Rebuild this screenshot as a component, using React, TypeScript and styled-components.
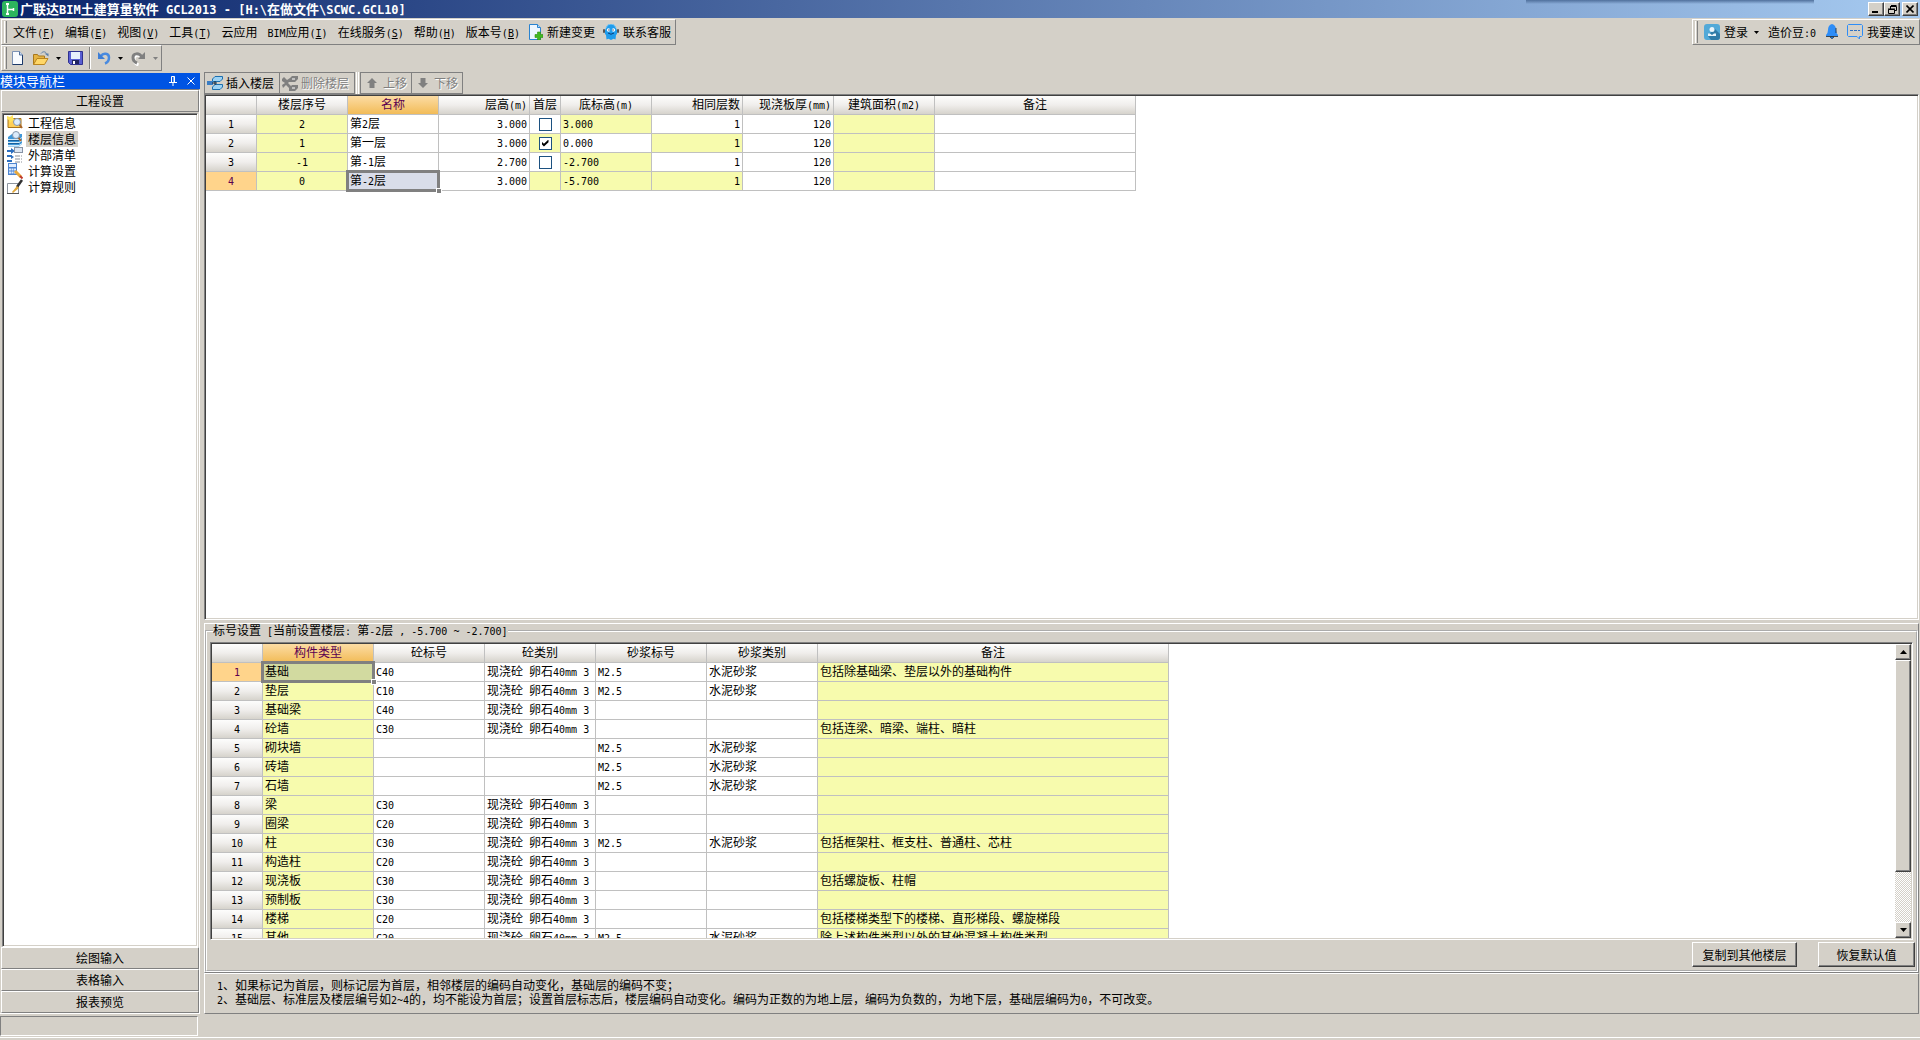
import React from "react";
import styled, { createGlobalStyle, css } from "styled-components";

const C = {
  face: "#d4d0c8",
  shadow: "#808080",
  dark: "#404040",
  light: "#ffffff",
  grid: "#c0c0c0",
  locked: "#f7fbad",
  picked: "#ffd48b",
  wine: "#5a0050",
};

const Global = createGlobalStyle`
  *, *::before, *::after { box-sizing: border-box; }
  body { margin: 0; background: ${C.face}; }
  body, button, input, legend, table {
    font-family: "Noto Sans CJK SC", sans-serif;
    font-size: 12px;
    line-height: 14px;
    color: #000;
  }
  button { padding: 0; border: 0; background: none; cursor: default; white-space: nowrap; }
`;

/* ---------- text: CJK at 12px, Latin set in a half-width mono face ---------- */

const Half = styled.span`
  font-family: "DejaVu Sans Mono", monospace;
  font-size: ${(p: { $size?: number }) => p.$size ?? 10}px;
  line-height: 1;
`;
const Wide = styled.span`
  white-space: pre;
`;

function Text({ children, half }: { children: string; half?: number }) {
  const runs = children.match(/[\x20-\x7e]+|[^\x20-\x7e]+/g) ?? [];
  return (
    <Wide>
      {runs.map((run, i) => {
        if (!/^[\x20-\x7e]/.test(run)) return <React.Fragment key={i}>{run}</React.Fragment>;
        const at = run.indexOf("&");
        return (
          <Half key={i} $size={half}>
            {at < 0 ? run : (
              <>
                {run.slice(0, at)}
                <u>{run[at + 1]}</u>
                {run.slice(at + 2)}
              </>
            )}
          </Half>
        );
      })}
    </Wide>
  );
}

/* ---------- shared bevels ---------- */

const sunken = css`
  border: 1px solid;
  border-color: ${C.shadow} ${C.light} ${C.light} ${C.shadow};
  box-shadow: inset 1px 1px ${C.dark}, inset -1px -1px ${C.face};
  padding: 1px;
`;
const raised = css`
  background: ${C.face};
  border: 1px solid;
  border-color: ${C.light} ${C.dark} ${C.dark} ${C.light};
  box-shadow: inset -1px -1px ${C.shadow};
`;
const soft = css`
  border: 1px solid;
  border-color: ${C.light} ${C.shadow} ${C.shadow} ${C.light};
`;

/* ---------- frame ---------- */

const Window = styled.div`
  display: flex;
  flex-direction: column;
  height: 100vh;
  overflow: hidden;
  background: ${C.face};
`;
const TitleBar = styled.header`
  position: relative;
  display: flex;
  align-items: center;
  flex: none;
  height: 18px;
  padding: 0 2px;
  gap: 2px;
  background: linear-gradient(90deg, #0a246a, #a6caf0);
`;
const TitleText = styled.h1`
  flex: 1;
  margin: 0;
  font-size: 13px;
  line-height: 18px;
  font-weight: 700;
  color: #fff;
`;
const DockShade = styled.div`
  position: absolute;
  top: 0;
  right: 106px;
  width: 288px;
  height: 4px;
  background: linear-gradient(#50709c, rgba(100, 140, 190, 0));
`;
const CaptionButtons = styled.div`
  display: flex;
`;
const CaptionButton = styled.button<{ $apart?: boolean }>`
  ${raised}
  display: grid;
  place-items: center;
  width: 16px;
  height: 14px;
  margin-left: ${(p) => (p.$apart ? 2 : 0)}px;
`;
const BarRow = styled.div`
  display: flex;
  justify-content: space-between;
  flex: none;
  padding: 1px 0 0 1px;
`;
const ToolRow = styled(BarRow)`
  padding: 0 0 1px 1px;
`;
const Bar = styled.div`
  ${soft}
  display: flex;
  align-items: center;
  height: 26px;
  padding: 0 0 0 2px;
`;
const Grip = styled.i`
  align-self: stretch;
  width: 3px;
  margin: 1px 0;
  border-left: 1px solid ${C.light};
  border-right: 1px solid ${C.shadow};
`;
const MenuItems = styled.nav`
  display: flex;
  align-items: center;
  padding-left: 1px;
`;
const MenuButton = styled.button`
  display: flex;
  align-items: center;
  gap: 4px;
  height: 22px;
  padding: 0 5px;
`;
const MenuIconButton = styled(MenuButton)`
  padding: 0 4px;
`;
const IconTools = styled.div`
  display: flex;
  align-items: center;
  padding: 0 3px 0 4px;
  gap: 7px;
`;
const IconButton = styled.button`
  display: grid;
  place-items: center;
  height: 20px;
`;
const DropButton = styled(IconButton)`
  padding: 0 4px 0 1px;
`;
const Rule = styled.i`
  width: 2px;
  height: 22px;
  margin: 0 -1px;
  border-left: 1px solid ${C.shadow};
  border-right: 1px solid ${C.light};
`;

/* ---------- body ---------- */

const Body = styled.div`
  display: flex;
  flex: 1;
  min-height: 0;
  gap: 4px;
  padding-right: 1px;
`;
const Sidebar = styled.aside`
  display: flex;
  flex-direction: column;
  width: 200px;
  padding-top: 1px;
`;
const SideCaption = styled.div`
  display: flex;
  align-items: center;
  flex: none;
  height: 16px;
  padding-right: 5px;
  gap: 10px;
  color: #fff;
  background: #0054e3;
`;
const SideTitle = styled.h2`
  flex: 1;
  margin: 0;
  font-size: 13px;
  line-height: 14px;
  font-weight: 400;
`;
const SideFrame = styled.div`
  display: flex;
  flex-direction: column;
  flex: 1;
  min-height: 0;
  border: 1px solid;
  border-color: ${C.shadow} ${C.light} ${C.light} ${C.face};
  border-left-width: 0;
  padding-left: 1px;
`;
const SideTab = styled.button`
  ${soft}
  flex: none;
  height: 22px;
`;
const NavList = styled.ul`
  ${sunken}
  flex: 1;
  margin: 1px 1px 0 1px;
  list-style: none;
  background: #fff;
`;
const NavItem = styled.li`
  display: flex;
  height: 16px;
  padding-left: 3px;
  gap: 3px;
`;
const NavLink = styled.a<{ $on?: boolean }>`
  padding: 0 2px;
  line-height: 16px;
  color: #000;
  text-decoration: none;
  background: ${(p) => (p.$on ? C.face : "transparent")};
`;

const Main = styled.main`
  display: flex;
  flex-direction: column;
  flex: 1;
  min-width: 0;
`;
const FloorTools = styled.div`
  display: flex;
  flex: none;
  height: 22px;
`;
const FloorTool = styled.button<{ $narrow?: boolean }>`
  display: flex;
  align-items: center;
  width: ${(p) => (p.$narrow ? 52 : 76)}px;
  padding-left: ${(p) => (p.$narrow ? 5 : 2)}px;
  gap: ${(p) => (p.$narrow ? 5 : 3)}px;
  border: 1px solid ${C.shadow};
  & + & { margin-left: -1px; }
  &:disabled { color: ${C.shadow}; text-shadow: 1px 1px #fff; }
`;
const ToolSplit = styled.i`
  width: 3px;
  margin: 0 1px;
  border-left: 1px solid ${C.light};
  border-right: 1px solid ${C.light};
`;
const GridBox = styled.div`
  ${sunken}
  display: flex;
  flex: 1;
  min-height: 0;
  background: #fff;
`;
const GridView = styled.div`
  flex: 1;
  overflow: hidden;
`;

/* ---------- tables ---------- */

const Table = styled.table<{ $width: number }>`
  width: ${(p) => p.$width}px;
  table-layout: fixed;
  border-collapse: separate;
  border-spacing: 0;
`;
type CellProps = { $align?: string; $locked?: boolean; $active?: boolean };
const cell = css`
  height: 19px;
  padding: 0 2px 2px;
  border-right: 1px solid ${C.grid};
  border-bottom: 1px solid ${C.grid};
  line-height: 16px;
  font-weight: 400;
  white-space: nowrap;
`;
const HeadCell = styled.th<CellProps>`
  ${cell}
  text-align: ${(p) => p.$align ?? "center"};
  color: ${(p) => (p.$active ? C.wine : "#000")};
  background: ${(p) =>
    p.$active ? "linear-gradient(#fcdca4, #f2bc58)" : "linear-gradient(#fdfdfc, #f0eeec 50%, #d6d3cc)"};
`;
const RowHead = styled.th<CellProps>`
  ${cell}
  text-align: center;
  color: ${(p) => (p.$active ? C.wine : "#000")};
  background: ${(p) => (p.$active ? C.picked : "linear-gradient(#fdfdfc, #f0eeec 50%, #d6d3cc)")};
`;
const Cell = styled.td<CellProps>`
  ${cell}
  position: relative;
  text-align: ${(p) => p.$align ?? "left"};
  background: ${(p) => (p.$locked ? C.locked : "#fff")};
`;
const TickCell = styled(Cell)`
  padding: 0;
`;
const Cursor = styled.span`
  position: absolute;
  inset: -2px;
  border: 3px solid ${C.shadow};
  pointer-events: none;
  &::after {
    content: "";
    position: absolute;
    right: -5px;
    bottom: -5px;
    width: 6px;
    height: 6px;
    border: 1px solid #fff;
    background: ${C.shadow};
  }
`;
const CursorCell = styled(Cell)<{ $fill: string }>`
  z-index: 1;
  background: ${(p) => p.$fill};
`;
const Tick = styled.input`
  appearance: none;
  display: block;
  width: 13px;
  height: 13px;
  margin: 0 auto;
  border: 1px solid #1c5180;
  background: #fff;
  &:checked::after {
    content: "";
    display: block;
    width: 7px;
    height: 7px;
    margin: 2px;
    background: #000;
    clip-path: polygon(0 29%, 35% 62%, 100% 0, 100% 38%, 35% 100%, 0 66%);
  }
`;

type Col = { title: string; width: number; align?: string; active?: boolean };

function Head({ cols }: { cols: Col[] }) {
  return (
    <>
      <colgroup>
        {cols.map((c, i) => <col key={i} style={{ width: c.width }} />)}
      </colgroup>
      <thead>
        <tr>
          {cols.map((c, i) => (
            <HeadCell key={i} scope="col" $align={c.align} $active={c.active}>
              <Text>{c.title}</Text>
            </HeadCell>
          ))}
        </tr>
      </thead>
    </>
  );
}
const total = (cols: Col[]) => cols.reduce((n, c) => n + c.width, 0);

const floorCols: Col[] = [
  { title: "", width: 51 },
  { title: "楼层序号", width: 91 },
  { title: "名称", width: 91, active: true },
  { title: "层高(m)", width: 91, align: "right" },
  { title: "首层", width: 31 },
  { title: "底标高(m)", width: 91 },
  { title: "相同层数", width: 91, align: "right" },
  { title: "现浇板厚(mm)", width: 91, align: "right" },
  { title: "建筑面积(m2)", width: 101 },
  { title: "备注", width: 201 },
];
const floors = [
  { code: "2", name: "第2层", height: "3.000", first: false, base: "3.000", baseLocked: true, sameLocked: false },
  { code: "1", name: "第一层", height: "3.000", first: true, base: "0.000", baseLocked: false, sameLocked: true },
  { code: "-1", name: "第-1层", height: "2.700", first: false, base: "-2.700", baseLocked: true, sameLocked: false },
  { code: "0", name: "第-2层", height: "3.000", first: null, base: "-5.700", baseLocked: true, sameLocked: true },
];

function FloorTable() {
  return (
    <Table $width={total(floorCols)}>
      <Head cols={floorCols} />
      <tbody>
        {floors.map((f, i) => {
          const current = i === 3;
          return (
            <tr key={f.code}>
              <RowHead scope="row" $active={current}><Text>{String(i + 1)}</Text></RowHead>
              <Cell $locked $align="center"><Text>{f.code}</Text></Cell>
              {current ? (
                <CursorCell $fill="#d9dde9"><Text>{f.name}</Text><Cursor /></CursorCell>
              ) : (
                <Cell><Text>{f.name}</Text></Cell>
              )}
              <Cell $align="right"><Text>{f.height}</Text></Cell>
              <TickCell $locked={f.first !== false}>
                {f.first !== null && <Tick type="checkbox" aria-label={`首层 ${f.name}`} defaultChecked={f.first} />}
              </TickCell>
              <Cell $locked={f.baseLocked}><Text>{f.base}</Text></Cell>
              <Cell $locked={f.sameLocked} $align="right"><Text>1</Text></Cell>
              <Cell $align="right"><Text>120</Text></Cell>
              <Cell $locked />
              <Cell />
            </tr>
          );
        })}
      </tbody>
    </Table>
  );
}

const gradeCols: Col[] = [
  { title: "", width: 51 },
  { title: "构件类型", width: 111, active: true },
  { title: "砼标号", width: 111 },
  { title: "砼类别", width: 111 },
  { title: "砂浆标号", width: 111 },
  { title: "砂浆类别", width: 111 },
  { title: "备注", width: 351 },
];
const MIX = "现浇砼 卵石40mm 3";
const MORTAR = "水泥砂浆";
const grades: [string, string, string, string][] = [
  ["基础", "C40", "M2.5", "包括除基础梁、垫层以外的基础构件"],
  ["垫层", "C10", "M2.5", ""],
  ["基础梁", "C40", "", ""],
  ["砼墙", "C30", "", "包括连梁、暗梁、端柱、暗柱"],
  ["砌块墙", "", "M2.5", ""],
  ["砖墙", "", "M2.5", ""],
  ["石墙", "", "M2.5", ""],
  ["梁", "C30", "", ""],
  ["圈梁", "C20", "", ""],
  ["柱", "C30", "M2.5", "包括框架柱、框支柱、普通柱、芯柱"],
  ["构造柱", "C20", "", ""],
  ["现浇板", "C30", "", "包括螺旋板、柱帽"],
  ["预制板", "C30", "", ""],
  ["楼梯", "C20", "", "包括楼梯类型下的楼梯、直形梯段、螺旋梯段"],
  ["其他", "C20", "M2.5", "除上述构件类型以外的其他混凝土构件类型"],
];

function GradeTable() {
  return (
    <Table $width={total(gradeCols)}>
      <Head cols={gradeCols} />
      <tbody>
        {grades.map(([kind, grade, mortar, note], i) => (
          <tr key={kind}>
            <RowHead scope="row" $active={i === 0}><Text>{String(i + 1)}</Text></RowHead>
            {i === 0 ? (
              <CursorCell $fill="#d2daa0"><Text>{kind}</Text><Cursor /></CursorCell>
            ) : (
              <Cell $locked><Text>{kind}</Text></Cell>
            )}
            <Cell><Text>{grade}</Text></Cell>
            <Cell><Text>{grade && MIX}</Text></Cell>
            <Cell><Text>{mortar}</Text></Cell>
            <Cell><Text>{mortar && MORTAR}</Text></Cell>
            <Cell $locked><Text>{note}</Text></Cell>
          </tr>
        ))}
      </tbody>
    </Table>
  );
}

/* ---------- lower panel ---------- */

const GradePanel = styled.section`
  ${soft}
  display: flex;
  flex: none;
  height: 350px;
  margin-top: 3px;
`;
const Group = styled.fieldset`
  display: flex;
  flex-direction: column;
  flex: 1;
  min-width: 0;
  margin: 0;
  padding: 5px 1px 0 3px;
  border: 2px groove #fff;
`;
const Legend = styled.legend`
  margin-left: 3px;
  padding: 0;
  line-height: 12px;
`;
const GroupGrid = styled(GridBox)`
  margin-right: 2px;
`;
const Scroll = styled.div`
  display: flex;
  flex-direction: column;
  width: 16px;
  background: repeating-conic-gradient(#fff 0 25%, ${C.face} 0 50%) 0 0 / 2px 2px;
`;
const ScrollPart = styled.button`
  ${raised}
  display: grid;
  place-items: center;
  flex: none;
  height: 16px;
`;
const Thumb = styled.div`
  ${raised}
  flex: 0 0 72%;
`;
const Filler = styled.div`
  flex: 1;
`;
const Actions = styled.div`
  display: flex;
  justify-content: flex-end;
  flex: none;
  gap: 21px;
  padding: 2px 0 3px;
`;
const Action = styled.button<{ $wide?: boolean }>`
  ${raised}
  width: ${(p) => (p.$wide ? 105 : 97)}px;
  height: 25px;
`;
const Notes = styled.section`
  ${soft}
  flex: none;
  height: 41px;
  padding: 4px 12px;
`;
const Note = styled.p`
  margin: 0;
  line-height: 13px;
`;
const Status = styled.footer`
  flex: none;
  height: 26px;
  padding-top: 2px;
`;
const StatusLine = styled.div`
  padding-bottom: 1px;
  border-bottom: 1px solid ${C.light};
`;
const StatusBox = styled.div`
  width: 198px;
  height: 20px;
  border: 1px solid;
  border-color: ${C.shadow} ${C.light} ${C.light} ${C.shadow};
`;

/* ---------- drawings ---------- */

const Svg = styled.svg`
  display: block;
  flex: none;
`;
const Ico = ({ w = 16, h = 16, children }: { w?: number; h?: number; children: React.ReactNode }) => (
  <Svg width={w} height={h} viewBox={`0 0 ${w} ${h}`} aria-hidden="true">{children}</Svg>
);
const AppLogo = () => (
  <Ico>
    <rect width="16" height="16" rx="3" fill="#2db55d" />
    <path d="M5.500 3v10M5.500 8.500h6M11.500 7v3" stroke="#fff" strokeWidth="1.500" fill="none" />
    <rect x="4" y="2" width="3" height="2" fill="#fff" /><rect x="4" y="12" width="3" height="2" fill="#fff" />
  </Ico>
);
const Caret = ({ off }: { off?: boolean }) => (
  <Ico w={5} h={3}><path d="M0 0h5L2.500 3z" fill={off ? "#808080" : "#000"} /></Ico>
);
const PageIcon = () => (
  <Ico w={14}>
    <path d="M1.500 1.500h7l3 3.500v9.500h-10z" fill="#f8fbff" stroke="#7d93b5" />
    <path d="M11.500 5v9.500h-10" stroke="#1d3968" fill="none" />
    <path d="M8.500 1.500V5h3" fill="#c7daf2" stroke="#52709c" />
  </Ico>
);
const FolderIcon = () => (
  <Ico w={17}>
    <path d="M1.500 14.500V4.500h4l1 1.500h6v3" fill="#e6b442" stroke="#a9781c" />
    <path d="M1.500 14.500L5 8.500h11l-3.500 6z" fill="#ffd768" stroke="#b98520" />
    <path d="M9 3.500c2-2.500 4.500-2 5.500 0" stroke="#5b7fa8" fill="none" /><path d="M12.500 3.500h4v3z" fill="#5b7fa8" />
  </Ico>
);
const DiskIcon = () => (
  <Ico w={15}>
    <path d="M.5 1.500h14v13h-12l-2-2z" fill="#5a5fd2" stroke="#2f3190" />
    <rect x="3" y="2" width="9" height="7" fill="#e8effc" /><rect x="4" y="10" width="7" height="4" fill="#202460" />
    <rect x="5" y="11" width="2" height="3" fill="#fff" />
  </Ico>
);
const UndoIcon = () => (
  <Ico w={14}>
    <path d="M4 6C6 2.500 12 3 12 7.500c0 3-1.500 5-4 6" stroke="#4a8be0" strokeWidth="2.500" fill="none" />
    <path d="M1 2v7h7z" fill="#3f7fd6" />
  </Ico>
);
const RedoIcon = () => (
  <Ico>
    <path d="M12 7C9 3 3 3.500 3 8c0 3 1.500 5 4.500 6" stroke="#fff" strokeWidth="3" fill="none" transform="translate(1 1)" />
    <path d="M12 7C9 2.500 3 3 3 7.500c0 3 1.500 4.500 4 5.500" stroke="#808080" strokeWidth="3" fill="none" />
    <path d="M15 2v7H8z" fill="#808080" />
  </Ico>
);
const ChangeIcon = () => (
  <Ico w={14}>
    <path d="M.5.5h8l3 3v12H.5z" fill="#eef6fe" stroke="#2a83d0" /><path d="M8.500.5v3h3" fill="#b9dcf8" stroke="#2a83d0" />
    <path d="M8.500 8h3v2.500H14v3h-2.500V16h-3v-2.500H6v-3h2.500z" fill="#43b81f" stroke="#2f8d12" strokeWidth=".6" />
  </Ico>
);
const ServiceIcon = () => (
  <Ico>
    <path d="M3 4Q4 0 8 0t5 4q2 3 1 6l-1 1-.5 4.500-2-.8L8 16l-2.500-1.300-2 .8L3 11l-1-1Q1 7 3 4z" fill="#1f9cec" />
    <path d="M3 4Q4 0 8 0t5 4" stroke="#7cc4f0" fill="none" />
    <rect x="0" y="5" width="2" height="4" rx="1" fill="#555" /><rect x="14" y="5" width="2" height="4" rx="1" fill="#555" />
    <circle cx="5.500" cy="6" r="1.700" fill="#fff" /><circle cx="10.500" cy="6" r="1.700" fill="#fff" />
    <circle cx="6" cy="6" r=".7" fill="#083c78" /><circle cx="10" cy="6" r=".7" fill="#083c78" />
    <path d="M5 9q3 2.500 6 0" stroke="#083c78" fill="none" />
  </Ico>
);
const UserIcon = () => (
  <Ico>
    <rect width="16" height="16" rx="3" fill="#52a9d8" /><path d="M10 4l6 6v3q0 3-3 3H7l-3-4z" fill="#2f7ba8" />
    <circle cx="8" cy="5.500" r="2.500" fill="#e8f3fa" /><path d="M4 12V9.500h2L8 11l2-1.500h2V12z" fill="#e8f3fa" />
  </Ico>
);
const BellIcon = () => (
  <Ico w={12}>
    <path d="M6 0q4 1 4 6 0 3 2 5v1H0v-1q2-2 2-5 0-5 4-6z" fill="#2e8df7" />
    <path d="M0 12.500h12M10 4v5" stroke="#123" strokeWidth=".8" /><path d="M4 13h4l-2 2z" fill="#2e8df7" stroke="#123" strokeWidth=".5" />
  </Ico>
);
const ChatIcon = () => (
  <Ico>
    <path d="M1.500.5h13l1 1v10l-1 1h-2V15l-2.500-2.500h-8.500l-1-1v-10z" fill="none" stroke="#2e8df7" />
    <path d="M3 6.500h10" stroke="#2e6fc0" strokeDasharray="3 1" />
  </Ico>
);
const InsertIcon = () => (
  <Ico>
    <path d="M5.500 4L8 1.500h7.500V4L13 6.500H5.500zM5.500 12L8 9.500h7.500V12l-2.500 2.500H5.500z" fill="#9cd2f4" stroke="#1c6fae" />
    <rect x="0" y="6" width="6" height="4" fill="#3a7dc4" /><path d="M5 8h5M8 6v4" stroke="#102840" />
  </Ico>
);
const DeleteIcon = () => (
  <Ico>
    <path d="M7 4l3-3h6v3l-3 3H7zM7 13l3-3h6v3l-3 3H7zM0 4l2-2 3 3 3-2v3L6 8l3 3-2 2-3-3-3 3-1-3 3-2-3-2z" fill="#808080" />
    <path d="M10 4h3M10 13h3" stroke="#fff" />
  </Ico>
);
const ArrowIcon = ({ down }: { down?: boolean }) => (
  <Ico w={12} h={12}>
    <g transform={down ? "rotate(180 6 6)" : undefined}>
      <path d="M6 1l5 5H8.500v5h-5V6H1z" fill="#808080" />
    </g>
  </Ico>
);
const PinIcon = () => (
  <Ico w={8} h={10}><path d="M2.500 6V.5h3V6M5 .5V6M0 6.500h8M4 6.500V10" stroke="#fff" fill="none" /></Ico>
);
const CrossIcon = ({ ink, w = 8 }: { ink: string; w?: number }) => (
  <Ico w={w} h={w}><path d={`M.5.5l${w - 1} ${w - 1}M${w - 0.5}.5L.5 ${w - 0.5}`} stroke={ink} strokeWidth={ink === "#000" ? 1.6 : 1} /></Ico>
);
const Lens = ({ x, y }: { x: number; y: number }) => (
  <g>
    <path d={`M${x + 2} ${y + 2}l3 4`} stroke="#a8662a" strokeWidth="2" />
    <circle cx={x} cy={y} r="3.500" fill="#dcecfb" stroke="#8494a8" />
  </g>
);
const navIcons = [
  <Ico key="info">
    <path d="M1 3.500h13v9H1z" fill="#ffcf57" stroke="#a7741a" /><path d="M0 1l3 1 3-2v3l2 2-3 1-2 2-1-3-2-1z" fill="#ffe35c" /><Lens x={10} y={7} />
  </Ico>,
  <Ico key="floor">
    <path d="M1 6l4-3h10v10l-3 2.500H1z" fill="#3f97d8" /><path d="M1 8.500h11l3-2M1 11.500h11l3-2M1 14.500h11l3-2" stroke="#d5ecfb" fill="none" />
    <path d="M1 9.500h11M1 12.500h11" stroke="#18619e" /><Lens x={9} y={4} />
  </Ico>,
  <Ico key="list">
    <path d="M0 4h5M0 9h5M0 14h5" stroke="#2c6fc0" strokeWidth="2" /><path d="M4 1l4 3-4 3zM4 8l3 2-3 2z" fill="#2c6fc0" />
    <rect x="7.500" y=".5" width="8" height="5" fill="#dde6f2" stroke="#8793a5" /><path d="M8 9h7M8 12h7M8 15h7" stroke="#8a8f98" strokeDasharray="5 1" />
  </Ico>,
  <Ico key="calc">
    <rect x="1" y="0" width="9" height="12" fill="#4d84d0" /><rect x="2" y="1" width="7" height="3" fill="#dcebff" />
    <path d="M2 6.500h7M2 9.500h7" stroke="#dcebff" strokeWidth="2" strokeDasharray="2 .5" />
    <path d="M8 8l6 6" stroke="#e8a93c" strokeWidth="3" /><path d="M13 13l2.500 2.500" stroke="#c0392b" strokeWidth="2" />
  </Ico>,
  <Ico key="rule">
    <path d="M.5 4.500h11v10H.5z" fill="#fff" stroke="#8d949e" /><path d="M0 14.500h12" stroke="#555" />
    <path d="M15 1l-5 7" stroke="#333" strokeWidth="2.500" /><path d="M10 7l2 2-6 5-1-1z" fill="#e0a73a" />
  </Ico>,
];

const menus = ["文件(&F)", "编辑(&E)", "视图(&V)", "工具(&T)", "云应用", "BIM应用(&I)", "在线服务(&S)", "帮助(&H)", "版本号(&B)"];
const navs = ["工程信息", "楼层信息", "外部清单", "计算设置", "计算规则"];

export default function App() {
  return (
    <Window>
      <Global />
      <TitleBar>
        <AppLogo />
        <TitleText><Text half={12}>广联达BIM土建算量软件 GCL2013 - [H:\在做文件\SCWC.GCL10]</Text></TitleText>
        <DockShade />
        <CaptionButtons>
          <CaptionButton aria-label="最小化"><Ico w={8} h={8}><path d="M0 7h6" stroke="#000" strokeWidth="2" /></Ico></CaptionButton>
          <CaptionButton aria-label="还原">
            <Ico w={9} h={9}><path d="M3 .5h5.500M2.500 1.500h6v4h-2M2.500 1v3M.5 4.500h6v4h-6zM0 4h7" stroke="#000" fill="none" /></Ico>
          </CaptionButton>
          <CaptionButton $apart aria-label="关闭"><CrossIcon ink="#000" /></CaptionButton>
        </CaptionButtons>
      </TitleBar>

      <BarRow>
        <Bar>
          <Grip />
          <MenuItems>
            {menus.map((m) => <MenuButton key={m}><Text>{m}</Text></MenuButton>)}
            <MenuIconButton><ChangeIcon />新建变更</MenuIconButton>
            <MenuIconButton><ServiceIcon />联系客服</MenuIconButton>
          </MenuItems>
        </Bar>
        <Bar>
          <Grip />
          <MenuItems>
            <MenuButton><UserIcon />登录</MenuButton>
            <DropButton aria-label="登录选项"><Caret /></DropButton>
            <MenuButton><Text>造价豆:0</Text></MenuButton>
            <MenuButton aria-label="消息"><BellIcon /></MenuButton>
            <MenuIconButton><ChatIcon />我要建议</MenuIconButton>
          </MenuItems>
        </Bar>
      </BarRow>

      <ToolRow>
        <Bar>
          <Grip />
          <IconTools>
            <IconButton aria-label="新建"><PageIcon /></IconButton>
            <IconButton aria-label="打开"><FolderIcon /></IconButton>
            <IconButton aria-label="打开选项"><Caret /></IconButton>
            <IconButton aria-label="保存"><DiskIcon /></IconButton>
            <Rule />
            <IconButton aria-label="撤销"><UndoIcon /></IconButton>
            <IconButton aria-label="撤销选项"><Caret /></IconButton>
            <IconButton aria-label="恢复" disabled><RedoIcon /></IconButton>
            <IconButton aria-label="恢复选项" disabled><Caret off /></IconButton>
          </IconTools>
        </Bar>
      </ToolRow>

      <Body>
        <Sidebar>
          <SideCaption>
            <SideTitle>模块导航栏</SideTitle>
            <IconButton aria-label="固定"><PinIcon /></IconButton>
            <IconButton aria-label="关闭导航栏"><CrossIcon ink="#fff" /></IconButton>
          </SideCaption>
          <SideFrame>
            <SideTab>工程设置</SideTab>
            <NavList>
              {navs.map((n, i) => (
                <NavItem key={n}>{navIcons[i]}<NavLink href="#" $on={i === 1}>{n}</NavLink></NavItem>
              ))}
            </NavList>
            <SideTab>绘图输入</SideTab>
            <SideTab>表格输入</SideTab>
            <SideTab>报表预览</SideTab>
          </SideFrame>
        </Sidebar>

        <Main>
          <FloorTools>
            <FloorTool><InsertIcon />插入楼层</FloorTool>
            <FloorTool disabled><DeleteIcon />删除楼层</FloorTool>
            <ToolSplit />
            <FloorTool $narrow disabled><ArrowIcon />上移</FloorTool>
            <FloorTool $narrow disabled><ArrowIcon down />下移</FloorTool>
          </FloorTools>
          <GridBox>
            <GridView><FloorTable /></GridView>
          </GridBox>

          <GradePanel>
            <Group>
              <Legend><Text>标号设置 [当前设置楼层: 第-2层 , -5.700 ~ -2.700]</Text></Legend>
              <GroupGrid>
                <GridView><GradeTable /></GridView>
                <Scroll>
                  <ScrollPart aria-label="向上滚动"><Ico w={7} h={4}><path d="M0 4h7L3.500 0z" /></Ico></ScrollPart>
                  <Thumb />
                  <Filler />
                  <ScrollPart aria-label="向下滚动"><Ico w={7} h={4}><path d="M0 0h7L3.500 4z" /></Ico></ScrollPart>
                </Scroll>
              </GroupGrid>
              <Actions>
                <Action $wide>复制到其他楼层</Action>
                <Action>恢复默认值</Action>
              </Actions>
            </Group>
          </GradePanel>

          <Notes>
            <Note><Text>1、如果标记为首层，则标记层为首层，相邻楼层的编码自动变化，基础层的编码不变；</Text></Note>
            <Note><Text>2、基础层、标准层及楼层编号如2~4的，均不能设为首层；设置首层标志后，楼层编码自动变化。编码为正数的为地上层，编码为负数的，为地下层，基础层编码为0，不可改变。</Text></Note>
          </Notes>
        </Main>
      </Body>

      <Status><StatusLine><StatusBox /></StatusLine></Status>
    </Window>
  );
}
